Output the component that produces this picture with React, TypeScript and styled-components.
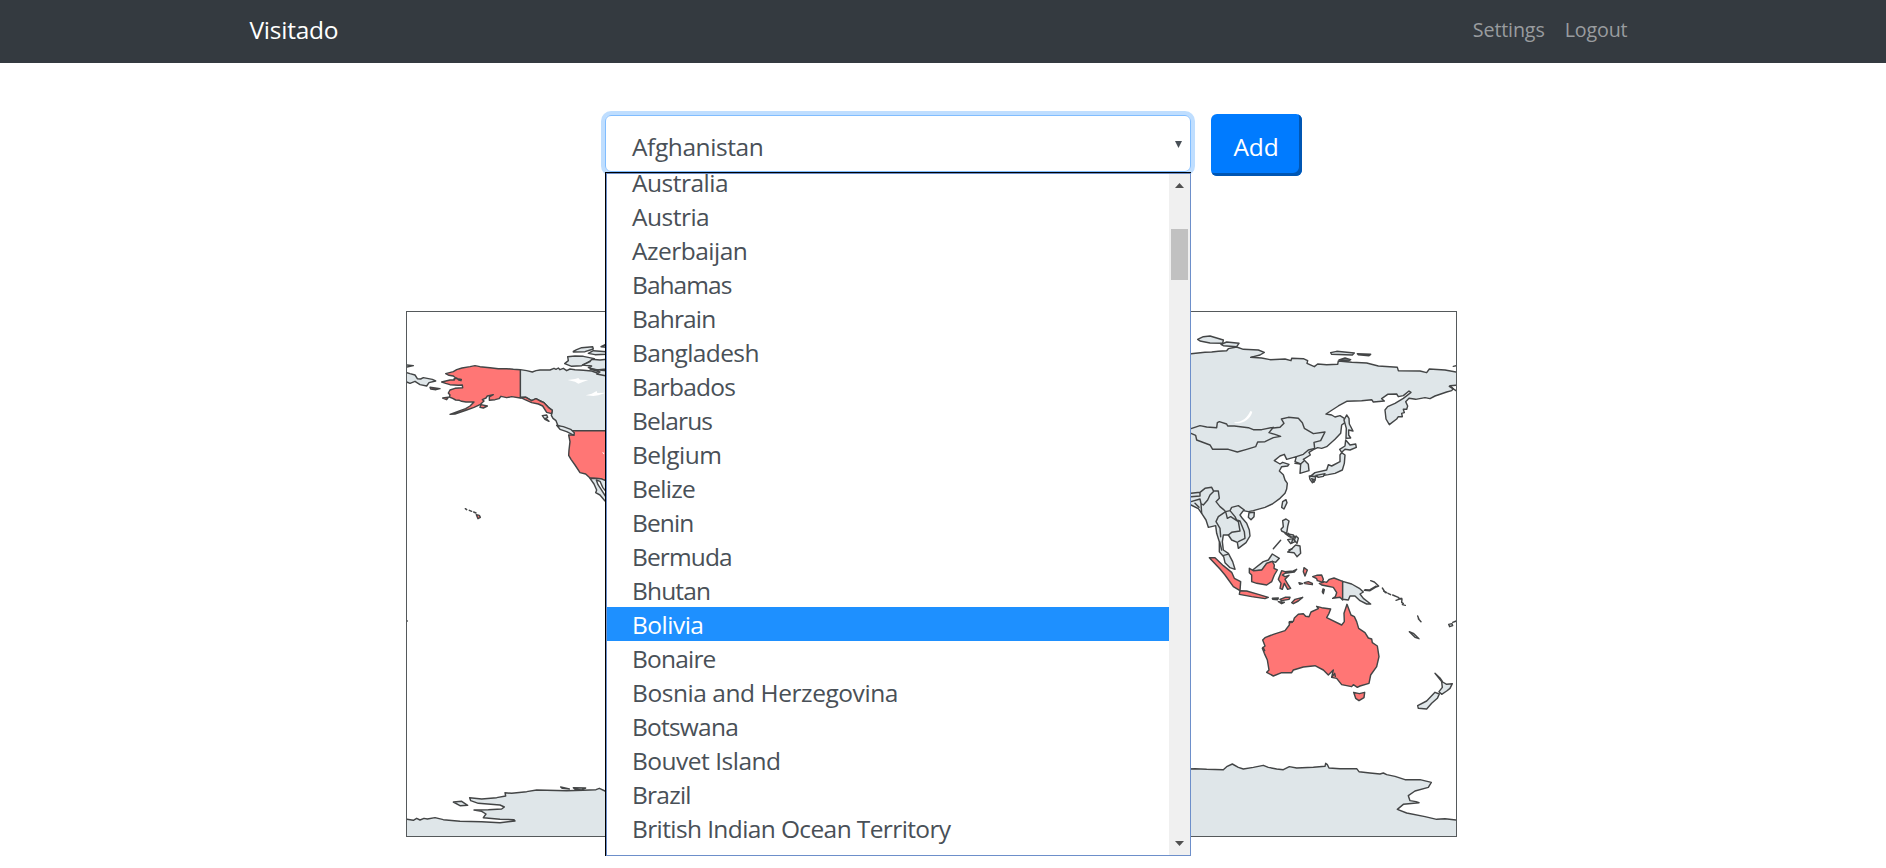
import React from "react";
import styled, { createGlobalStyle } from "styled-components";

const GlobalStyle = createGlobalStyle`
  *, *::before, *::after { box-sizing: border-box; }
  html, body { margin: 0; height: 868px; overflow: hidden; background: #fff; }
  body { font-family: "Open Sans", "Noto Sans", sans-serif; color: #495057; }
`;

const Navbar = styled.nav`
  height: 63px;
  background: #343a40;
  display: flex;
  justify-content: center;
`;

const Container = styled.div`
  width: 1387px;
  display: flex;
  align-items: center;
  justify-content: space-between;
`;

const Brand = styled.a`
  color: #fff;
  font-size: 24.5px;
  letter-spacing: -0.25px;
  line-height: 36px;
  padding-bottom: 3px;
`;

const NavLinks = styled.div`
  display: flex;
  gap: 20px;
  padding-right: 9px;
  padding-bottom: 4px;
`;

const NavLink = styled.a`
  color: #999c9f;
  font-size: 19.7px;
  letter-spacing: -0.15px;
  line-height: 30px;
`;

const Main = styled.main`
  width: 1886px;
`;

const CountryForm = styled.form`
  display: flex;
  gap: 20px;
  height: 62px;
  margin: 51px 0 0 605px;
`;

const Picker = styled.div`
  position: relative;
  width: 586px;
  padding-top: 1px;
`;

const SelectBox = styled.div`
  height: 57px;
  border: 1px solid #80bdff;
  border-radius: 6px;
  box-shadow: 0 0 0 4px #bfdeff;
  display: flex;
  align-items: center;
  justify-content: space-between;
  padding: 6px 8px 0 26px;
`;

const Label = styled.span<{ $track?: number }>`
  font-size: 24.5px;
  line-height: 34px;
  letter-spacing: ${(p) => p.$track ?? -0.5}px;
  white-space: nowrap;
`;

const SelectArrow = styled.svg`
  width: 7px;
  height: 7px;
  margin-bottom: 4px;
`;

const Menu = styled.div`
  position: absolute;
  z-index: 2;
  left: 0;
  top: 58px;
  width: 586px;
  height: 684px;
  background: #fff;
  border-left: 1px solid #000;
  border-top: 1px solid #000;
  display: flex;
`;

const MenuInner = styled.div`
  flex: 1;
  display: flex;
  overflow: hidden;
  border: 1px solid #6d8fca;
`;

const Options = styled.ul`
  list-style: none;
  flex: 1;
  margin: -9px 0 0;
  padding: 0;
`;

const Option = styled.li<{ $active: boolean }>`
  height: 34px;
  padding: 1px 0 0 25px;
  color: ${(p) => (p.$active ? "#fff" : "#495057")};
  background: ${(p) => (p.$active ? "#1e90ff" : "transparent")};
`;

const Scrollbar = styled.div`
  width: 21px;
  background: #f0f0f0;
  display: flex;
  flex-direction: column;
  align-items: center;
  padding: 9px 0;
`;

const ScrollArrow = styled.svg`
  width: 9px;
  height: 5px;
`;

const Thumb = styled.div`
  width: 17px;
  height: 51px;
  margin: 41px 0 auto;
  background: #c1c1c1;
`;

const AddButton = styled.button`
  width: 91px;
  height: 62px;
  border: 0;
  border-radius: 6px;
  background: #007bff;
  box-shadow: inset -3px -3px 0 #0056b3;
  color: #fff;
  font-family: inherit;
  padding: 4px 1px 0 0;
`;

const MapFrame = styled.div`
  width: 1051px;
  height: 526px;
  margin: 135px 0 0 406px;
  border: 1px solid #55595b;
  overflow: hidden;
`;

const MapCanvas = styled.svg`
  display: block;
  width: 1051px;
  height: 526px;
  margin: -1px;
  stroke: #434546;
  stroke-width: 4.3;
  stroke-linejoin: round;
  stroke-linecap: round;
`;

const LAND = "#dfe6e9";
const VISITED = "#ff7675";

type Shape = { d: string; fill?: string; bare?: boolean };
type Region = { x: number; y: number; shapes: Shape[] };

const regions: Region[] = [
  {
    x: -6,
    y: -11,
    shapes: [
      { fill: LAND, d: "M361 209L380 212L397 216L408 212L420 210L450 210L462 205L468 208L475 204L480 209L490 205L500 212L510 207L525 209L550 211L575 213L600 222L640 228V392H510L490 385L473 375L468 362L459 355L454 346L457 331L445 322L432 308L408 296L395 302L378 292L361 293Z" },
      { fill: VISITED, d: "M361 209L340 208L320 206L295 206L270 203L240 200L225 197L210 200L186 204L170 209L160 215L137 221L147 226L160 228L168 235L184 238L183 242L176 240L170 234L162 237L163 240L150 240L125 246L137 250L150 254L175 256L187 255L188 263L165 265L150 270L145 279L150 285L148 291L158 295L167 300L178 301L185 304L198 306L222 306L210 318L197 326L180 332L150 343L165 342L200 330L222 322L240 314L252 303L247 299L258 294L262 288L280 284L268 291L268 301L285 299L297 296L303 289L320 293L335 290L361 294Z" },
      { fill: VISITED, d: "M361 292L378 292L395 302L408 296L420 303L432 308L445 322L457 331L455 341L440 337L428 318L415 312L395 308L375 299Z" },
      { fill: VISITED, d: "M510 392H640V548L615 541L602 536L570 534L557 522L540 518L525 495L513 478L506 466L507 450L510 425L506 405L520 405Z" },
      { fill: LAND, d: "M570 535L582 552L590 570L587 578L600 585L615 603L640 620V545L615 541L602 536Z" },
      { fill: "#fff", d: "M589 540L594 554L602 566L616 588L620 577L608 562L600 544Z" },
      { fill: LAND, d: "M470 376L490 380L512 388L523 398L522 406L500 395L480 388Z" },
      { fill: LAND, d: "M427 347L440 345L443 352L437 355L447 364L435 358Z" },
      { fill: LAND, d: "M520 154L530 149L545 143L578 140L580 147L555 155L520 156Z" },
      { fill: LAND, d: "M565 160L580 152L620 155V163L585 164Z" },
      { fill: LAND, d: "M603 140L620 132V142Z" },
      { fill: LAND, d: "M503 170L525 168L550 169L583 176L562 188L545 197L515 199L494 191L505 182Z" },
      { fill: LAND, d: "M548 195L570 185L575 178L600 180L620 178V207L590 210L565 203L575 198Z" },
      { fill: LAND, d: "M570 207L620 212V228L590 222L600 216Z" },
      { fill: LAND, d: "M15 216L30 221L45 225L52 236L62 237L70 233L97 238L107 243L87 248L80 258L60 254L45 244L30 250L15 244Z" },
      { fill: LAND, d: "M15 194L40 197L15 202Z" },
      { fill: VISITED, d: "M90 262L120 266L108 269L92 267Z" },
      { fill: VISITED, d: "M128 294L145 292L140 299Z" },
      { fill: VISITED, d: "M243 314L262 318L250 324L240 322Z" },
      { fill: "#fff", bare: true, d: "M503 240L525 237L535 234L540 239L565 240L550 245L535 251L525 245Z" },
      { fill: "#fff", bare: true, d: "M557 286L575 281L590 273L592 279L617 278L595 286L580 288Z" },
      { fill: "#fff", bare: true, d: "M606 456L613 459L611 463Z" },
      { d: "M196 626L200 629M208 631L215 634M221 636L228 639" },
      { fill: VISITED, d: "M229 644L238 646L241 652L234 656Z" },
      { d: "M19 963L22 963" },
    ],
  },
  {
    x: 779,
    y: 9,
    shapes: [
      { fill: LAND, d: "M0 102L18 101L60 97L80 96L100 94L125 92L130 86L155 81L175 88L220 90L238 97L225 105L197 112L230 114L255 119L300 117L318 122L320 115L355 116L368 122L366 130L388 140L398 132L425 134L458 133L460 123L500 127L545 129L580 138L637 142L640 152L705 153L725 158L733 147L780 150L820 157V195L795 197L805 206L800 212L785 216L750 228L735 236L720 233L692 238L672 235L662 245L668 258L665 268L655 268L658 278L650 280L652 290L640 290L635 297L613 314L603 297L600 270L608 260L630 250L655 235L678 217L672 213L655 227L640 230L635 222L608 223L590 236L598 243L565 246L560 239L530 242L485 244L460 258L423 282L440 285L450 291L465 287L478 295L480 308L470 315L467 340L450 358L425 380L410 385L398 383L385 389L372 397L376 405L355 418L370 433L372 452L345 460L347 432L330 425L334 410L305 418L298 403L285 408L268 422L285 432L293 427L312 433L308 438L290 440L283 453L295 464L300 480L307 490L305 507L300 520L285 535L262 552L240 562L205 572L190 575L175 572L165 585L172 595L185 610L193 630L195 648L183 668L160 685L157 667L140 660L130 645L115 645L112 665L115 690L130 700L143 725L150 748L135 743L120 728L116 710L103 695L103 665L95 640L92 617L70 622L63 600L50 580L40 566L18 555L0 560Z" },
      { d: "M0 331L18 326L45 317L65 321L95 323L97 308L103 305L125 312L128 318L148 318L190 323L205 329L230 329L265 322L252 338L270 343L287 349L265 353L240 365L218 366L212 380L185 388L157 396L130 388L83 388L75 375L35 360L32 346L18 340M265 324L285 322L297 310L289 297L310 292L340 295L352 308L358 325L385 341L420 336L407 362L387 367L389 385M334 410L355 403L370 390L389 385M330 430L347 432L356 424" },
      { d: "M18 520L45 517L60 505L80 502L85 512L100 513L103 535L93 545L105 560L115 568L122 575L135 572L140 562L160 557L178 570M18 530L45 528L45 518M18 545L45 537L48 551L55 555L68 540L75 525L85 515M48 551L50 580M30 550L42 562M122 575L100 590L93 605L105 625L107 650M122 575L127 595L137 590L160 605L165 633L140 637L130 645M135 572L150 590L155 600L165 603L178 635L180 655L160 665M116 706L128 703M104 665L110 690" },
      { fill: "#fff", bare: true, d: "M147 307C174 307 188 291 196 273L202 275C198 295 176 311 151 310Z" },
      { fill: LAND, d: "M485 285L492 295L493 312L504 333L491 330L491 345L497 354L483 355L484 325L477 300Z" },
      { fill: LAND, d: "M482 360L495 375L512 372L514 382L495 390L480 388L470 397L464 388L480 378Z" },
      { fill: LAND, d: "M470 398L480 405L478 430L472 450L450 460L430 464L405 468L375 470L390 458L425 450L430 434L440 438L465 425L465 405Z" },
      { fill: LAND, d: "M373 468L392 470L390 480L382 488L375 478Z" },
      { fill: LAND, d: "M393 466L420 461L415 469L400 472Z" },
      { fill: LAND, d: "M38 58L55 50L75 48L115 60L113 70L75 69L45 63Z" },
      { fill: LAND, d: "M108 73L125 66L162 70L155 80L115 77Z" },
      { fill: LAND, d: "M437 98L455 94L508 99L502 105L440 103Z" },
      { fill: LAND, d: "M517 101L557 103L552 107L520 104Z" },
      { fill: "#6d7376", d: "M462 120L480 114L497 119L490 123Z" },
      { d: "M805 139L815 137M793 199L815 213" },
      { fill: LAND, d: "M303 539L306 548L297 567L290 562L293 545Z" },
      { fill: LAND, d: "M192 578L208 577L207 590L198 599L190 592Z" },
      { fill: LAND, d: "M380 476L390 480L387 487Z" },
      { fill: LAND, d: "M293 602L303 597L312 603L308 620L305 640L290 633L288 628L295 620Z" },
      { fill: LAND, d: "M300 640L325 645L330 652L313 650ZM308 659L325 656L330 665L317 671ZM333 648L340 655L336 670L328 660ZM322 685L332 675L345 678L347 700L336 710L327 698L308 696Z" },
      { d: "M265 686L287 661M310 640L318 652M320 668L324 655M312 690L322 686" },
      { fill: LAND, d: "M203 750L235 725L250 720L262 702L283 715L272 727L262 724L245 730L232 750L210 753Z" },
      { fill: VISITED, d: "M193 745L205 752L230 750L245 730L262 724L268 735L267 745L277 750L268 765L260 785L245 795L215 790L200 785L200 765L193 758Z" },
      { fill: VISITED, d: "M73 713L90 713L115 737L140 757L148 775L167 785L165 812L145 800L120 765L105 747Z" },
      { fill: VISITED, d: "M165 812L185 813L220 823L250 832L240 836L200 830L163 823Z" },
      { fill: VISITED, d: "M262 835L280 834L278 839L263 838ZM285 838L300 832L315 832L312 838L290 842ZM320 848L330 838L353 832L340 843L325 851ZM280 845L298 847L290 851Z" },
      { fill: VISITED, d: "M290 752L300 755L325 753L335 748L328 756L300 760L292 765L300 770L312 766L300 778L310 795L317 805L308 808L298 790L292 808L285 805L288 790L280 778Z" },
      { fill: VISITED, d: "M357 743L367 750L360 768L355 755ZM342 788L353 791L344 793ZM358 788L370 785L382 790L382 794L360 791Z" },
    ],
  },
  {
    x: 914,
    y: 169,
    shapes: [
      { fill: VISITED, d: "M-22 290L-10 286L5 285L10 298L8 304L20 307L28 298L42 294L68 304V360L60 352L38 355L46 350L50 338L40 322L20 318L5 315L-2 310L10 307L-8 302L-10 296Z" },
      { fill: LAND, d: "M68 304L95 312L118 325L130 336L120 342L130 355L152 372L140 372L120 362L105 348L90 348L85 360L68 358Z" },
      { d: "M133 331L150 332L166 322L176 318L163 306L152 302M135 329L148 330L168 318M187 324L196 338M191 333L200 338M204 340L212 344M218 345L235 352M228 361L245 355M235 354L246 357L245 367L250 371M247 374L256 376" },
      { fill: LAND, d: "M9 327L13 329L10 341L7 336Z" },
    ],
  },
  {
    x: 834,
    y: 279,
    shapes: [
      { fill: VISITED, d: "M75 143L100 133L135 122L148 105L148 95L160 94L163 84L175 73L190 71L197 79L207 80L213 66L235 56L230 49L245 53L272 57L267 70L260 83L305 105L313 95L312 70L321 43L333 75L343 80L350 95L356 115L375 128L385 144L395 147L397 158L412 168L417 200L410 230L392 255L387 280L360 288L352 292L340 284L335 290L305 284L290 265L275 262L280 240L265 255L250 240L225 227L190 231L160 240L155 248L125 248L100 258L80 247L87 240L82 210L73 190L67 175L75 168L68 150Z" },
      { fill: VISITED, d: "M341 307L358 311L374 307L372 323L357 332L347 325Z" },
      { fill: LAND, d: "M585 250L600 264L608 276L620 283L637 281L630 295L620 303L605 313L597 305L607 292L605 275Z" },
      { fill: LAND, d: "M585 307L598 312L592 325L575 340L560 357L535 355L533 347L560 333Z" },
      { fill: LAND, d: "M508 125L520 130L537 146L525 142Z" },
      { d: "M533 78L537 88M535 86L543 95M275 262L284 250L286 259M148 98L157 97M69 172L74 182" },
      { fill: LAND, d: "M626 103L636 101L638 107L629 110Z" },
      { d: "M638 97L649 93" },
    ],
  },
  {
    x: -6,
    y: 429,
    shapes: [
      { fill: LAND, d: "M15 237L40 241L50 235L60 240L72 235L82 237L105 233L130 239L180 244L245 245L300 248L345 243L342 239L300 238L250 233L258 222L245 214L222 210L265 209L305 207L313 201L300 195L235 190L212 182L209 173L245 177L290 173L317 168L315 158L335 160L380 155L410 150L500 152L550 151L588 149L598 145L615 153L640 155V295H15Z" },
      { fill: LAND, d: "M160 186L185 184L203 196L180 197Z" },
      { fill: LAND, d: "M482 141L508 147L487 145ZM520 143L557 144L545 150L525 148Z" },
    ],
  },
  {
    x: 674,
    y: 429,
    shapes: [
      { fill: LAND, d: "M300 88L345 86L380 88L430 89L440 80L457 72L475 82L490 87L520 82L550 76L565 82L590 87L610 89L628 80L650 84L700 82L735 79L737 70L742 74L747 84L780 86L830 86L837 95L870 99L900 102L910 99L920 104L945 109L975 119L1020 119L1054 127L1045 142L1005 153L985 167L990 182L1008 185L1017 188L970 193L952 208L980 219L1035 230L1070 238L1095 236L1135 241V295H300Z" },
    ],
  },
];

const WorldMap = () => (
  <MapFrame>
    <MapCanvas viewBox="0 0 1051 526">
      {regions.map((r, i) => (
        <g key={i} transform={`translate(${r.x} ${r.y}) scale(0.33333)`}>
          {r.shapes.map((s, j) => (
            <path key={j} d={s.d} fill={s.fill ?? "none"} stroke={s.bare ? "none" : undefined} />
          ))}
        </g>
      ))}
    </MapCanvas>
  </MapFrame>
);

// Each country with its letter spacing, where it differs from the default.
const countries: [string, number?][] = [
  ["Australia"],
  ["Austria"],
  ["Azerbaijan"],
  ["Bahamas", -0.95],
  ["Bahrain", -0.85],
  ["Bangladesh", -0.62],
  ["Barbados", -0.8],
  ["Belarus", -0.85],
  ["Belgium", -0.5],
  ["Belize", -0.7],
  ["Benin", -0.9],
  ["Bermuda", -0.88],
  ["Bhutan", -0.85],
  ["Bolivia"],
  ["Bonaire", -0.8],
  ["Bosnia and Herzegovina", -0.44],
  ["Botswana", -0.78],
  ["Bouvet Island"],
  ["Brazil", -0.75],
  ["British Indian Ocean Territory", -0.61],
  ["Brunei", -0.7],
];

export default function App() {
  return (
    <>
      <GlobalStyle />
      <Navbar>
        <Container>
          <Brand>Visitado</Brand>
          <NavLinks>
            <NavLink>Settings</NavLink>
            <NavLink>Logout</NavLink>
          </NavLinks>
        </Container>
      </Navbar>
      <Main>
        <CountryForm>
          <Picker>
            <SelectBox>
              <Label $track={-0.42}>Afghanistan</Label>
              <SelectArrow viewBox="0 0 7 7">
                <path d="M0 0H7L3.5 7Z" fill="#495057" />
              </SelectArrow>
            </SelectBox>
            <Menu>
              <MenuInner>
                <Options>
                  {countries.map(([name, track]) => (
                    <Option key={name} $active={name === "Bolivia"}>
                      <Label $track={track}>{name}</Label>
                    </Option>
                  ))}
                </Options>
                <Scrollbar>
                  <ScrollArrow viewBox="0 0 9 5">
                    <path d="M0 5L4.5 0L9 5Z" fill="#505050" />
                  </ScrollArrow>
                  <Thumb />
                  <ScrollArrow viewBox="0 0 9 5">
                    <path d="M0 0H9L4.5 5Z" fill="#505050" />
                  </ScrollArrow>
                </Scrollbar>
              </MenuInner>
            </Menu>
          </Picker>
          <AddButton type="button">
            <Label $track={-0.2}>Add</Label>
          </AddButton>
        </CountryForm>
        <WorldMap />
      </Main>
    </>
  );
}
